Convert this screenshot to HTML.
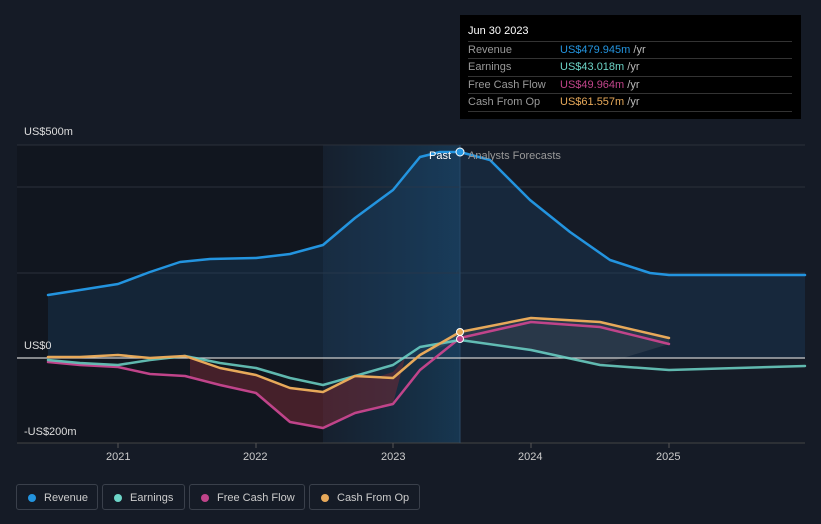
<!DOCTYPE html><html><head><style>
body{margin:0;width:821px;height:524px;background:#151b26;font-family:"Liberation Sans",sans-serif;overflow:hidden;position:relative}
.t{position:absolute;color:#fff;font-size:11px}
.ax{position:absolute;color:#ddd;font-size:11px}
.tip{position:absolute;left:460px;top:15px;width:341px;height:104px;background:#000;}
.tip .h{position:absolute;left:8px;top:10px;color:#fff;font-size:11px}
.row{position:absolute;left:8px;width:324px;border-top:1px solid #333;height:17px;font-size:11px;line-height:17px;color:#999}
.row span{position:absolute;left:92px}
.row i{font-style:normal;color:#bbb}
.leg{position:absolute;top:484px;height:26px;border:1px solid #3a404b;border-radius:3px;color:#ccc;font-size:11px;line-height:26px;box-sizing:border-box;padding-left:27px}
.leg b{position:absolute;left:11px;top:9px;width:8px;height:8px;border-radius:50%}
</style></head><body>
<svg width="821" height="524" style="position:absolute;left:0;top:0">
<defs><linearGradient id="fg" x1="0" x2="1"><stop offset="0" stop-color="#1a5a8a" stop-opacity=".08"/><stop offset="1" stop-color="#1a6aa0" stop-opacity=".35"/></linearGradient></defs>
<rect x="17" y="145" width="306" height="298" fill="#11161f"/>
<rect x="323" y="145" width="137" height="298" fill="url(#fg)"/>
<g stroke="#2a303b" stroke-width="1"><line x1="17" y1="145" x2="805" y2="145"/><line x1="17" y1="187" x2="805" y2="187"/><line x1="17" y1="273" x2="805" y2="273"/><line x1="17" y1="443" x2="805" y2="443" stroke="#444"/></g>
<line x1="460" y1="145" x2="460" y2="443" stroke="#2a4a66"/>
<polygon fill="#1e4a70" fill-opacity=".3" points="48,358 48,295 80,290 118,284 150,272 180,262 210,259 256,258 290,254 323,245 355,218 393,190 420,157 440,152 460,152 490,160 530,200 570,232 610,260 650,273 669,275 805,275 805,358"/>
<polygon fill="#7a2a35" fill-opacity=".5" points="190,358 220,368 256,375 290,388 323,392 355,376 380,376 393,372 405,358 393,404 355,413 323,428 290,422 256,393 220,385 190,377"/>
<polygon fill="#aaa" fill-opacity=".12" points="420,355 460,332 531,318 600,322 669,338 669,344 600,365 531,350 460,340"/>
<line x1="17" y1="358" x2="805" y2="358" stroke="#ccc" stroke-width="1.2"/>
<g fill="none" stroke-width="2.5" stroke-linejoin="round" stroke-linecap="round">
<polyline stroke="#2394df" points="48,295 80,290 118,284 150,272 180,262 210,259 256,258 290,254 323,245 355,218 393,190 420,157 440,152 460,152 490,160 530,200 570,232 610,260 650,273 669,275 805,275"/>
<polyline stroke="#c0448a" points="48,362 80,365 118,367 150,374 185,376 220,385 256,393 290,422 323,428 355,413 393,404 420,370 460,338 531,322 600,327 669,344"/>
<polyline stroke="#6dd5c8" stroke-opacity=".85" points="48,360 80,363 118,365 150,360 185,356 220,363 256,368 290,378 323,385 355,376 393,365 420,347 460,340 531,350 600,365 669,370 805,366"/>
<polyline stroke="#e7a95a" points="48,357 80,357 118,355 150,358 185,356 220,368 256,375 290,388 323,392 355,376 393,378 420,355 460,332 531,318 600,322 669,338"/>
</g>
<circle cx="460" cy="152" r="4" fill="#2394df" stroke="#fff" stroke-width="1"/>
<circle cx="460" cy="339" r="3.5" fill="#c0448a" stroke="#fff" stroke-width="1"/>
<circle cx="460" cy="332" r="3.5" fill="#e7a95a" stroke="#fff" stroke-width="1"/>
<g stroke="#555"><line x1="118" y1="443" x2="118" y2="448"/><line x1="256" y1="443" x2="256" y2="448"/><line x1="393" y1="443" x2="393" y2="448"/><line x1="531" y1="443" x2="531" y2="448"/><line x1="669" y1="443" x2="669" y2="448"/></g>
</svg>
<div class="ax" style="left:24px;top:126px">US$500m</div>
<div class="ax" style="left:24px;top:340px">US$0</div>
<div class="ax" style="left:24px;top:426px">-US$200m</div>
<div class="t" style="left:429px;top:150px">Past</div>
<div class="t" style="left:468px;top:150px;color:#999">Analysts Forecasts</div>
<div class="ax" style="left:106px;top:451px;color:#ccc">2021</div>
<div class="ax" style="left:243px;top:451px;color:#ccc">2022</div>
<div class="ax" style="left:381px;top:451px;color:#ccc">2023</div>
<div class="ax" style="left:518px;top:451px;color:#ccc">2024</div>
<div class="ax" style="left:656px;top:451px;color:#ccc">2025</div>
<div class="tip"><div class="h">Jun 30 2023</div>
<div class="row" style="top:26px">Revenue<span style="color:#2394df">US$479.945m <i>/yr</i></span></div>
<div class="row" style="top:43px">Earnings<span style="color:#6dd5c8">US$43.018m <i>/yr</i></span></div>
<div class="row" style="top:61px">Free Cash Flow<span style="color:#c0448a">US$49.964m <i>/yr</i></span></div>
<div class="row" style="top:78px;border-bottom:1px solid #333">Cash From Op<span style="color:#e7a95a">US$61.557m <i>/yr</i></span></div>
</div>
<div class="leg" style="left:16px;width:82px"><b style="background:#2394df"></b>Revenue</div>
<div class="leg" style="left:102px;width:83px"><b style="background:#6dd5c8"></b>Earnings</div>
<div class="leg" style="left:189px;width:116px"><b style="background:#c0448a"></b>Free Cash Flow</div>
<div class="leg" style="left:309px;width:111px"><b style="background:#e7a95a"></b>Cash From Op</div>
</body></html>
